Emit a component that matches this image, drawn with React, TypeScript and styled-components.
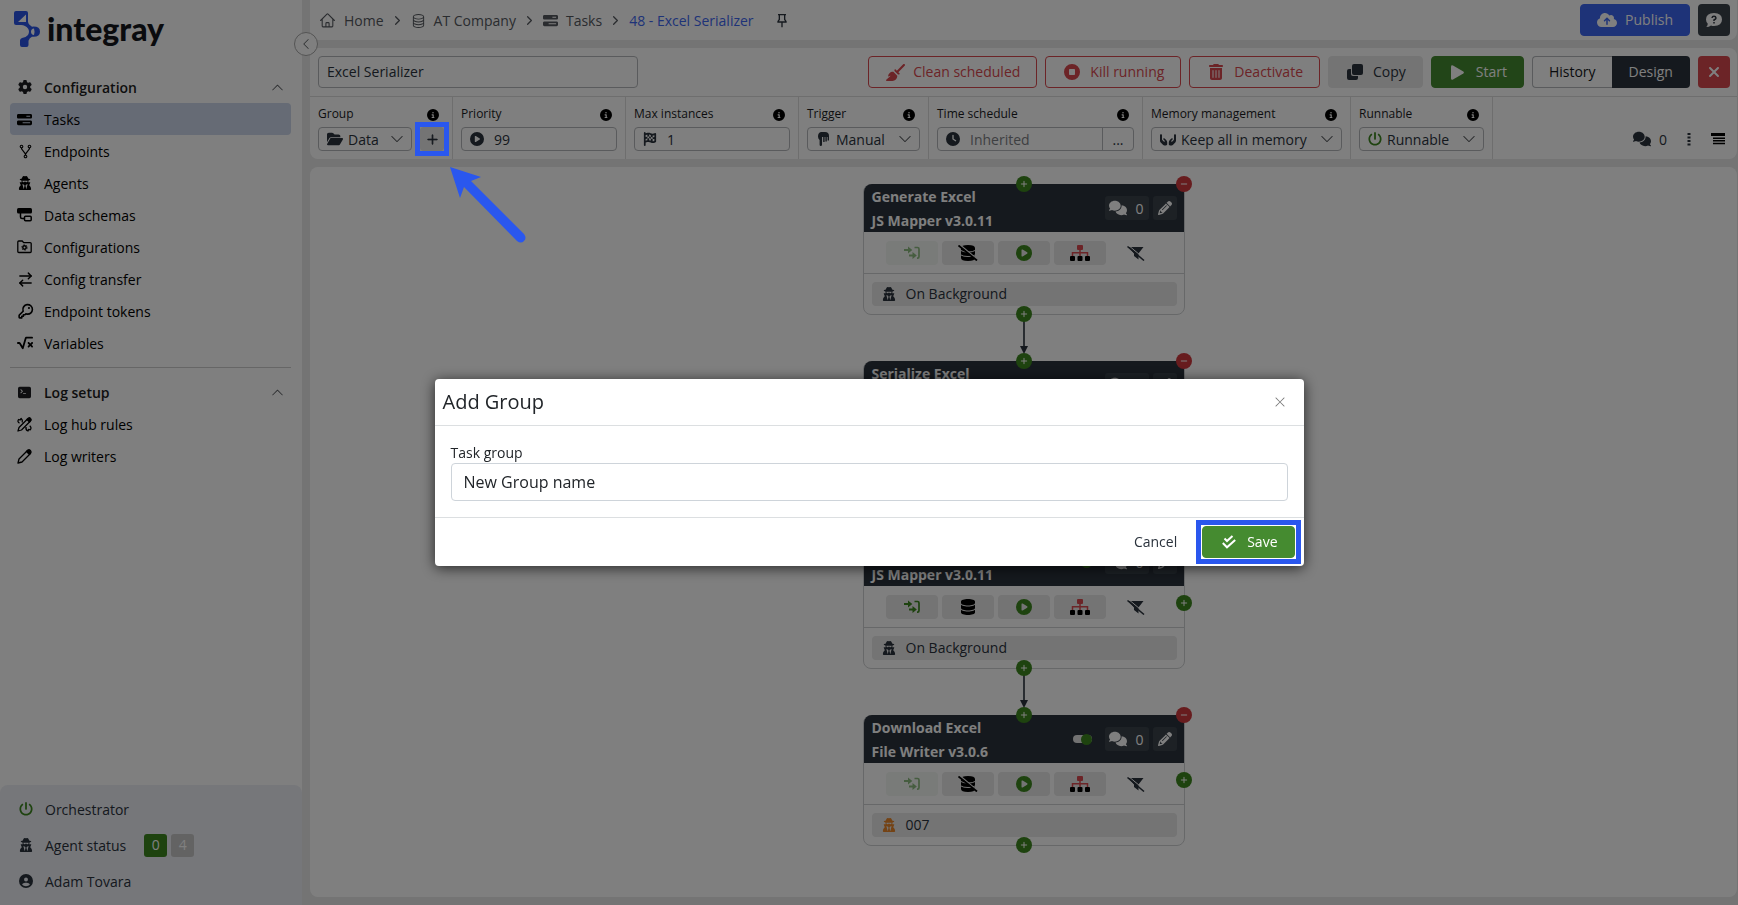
import React from "react";
import styled, { createGlobalStyle, css } from "styled-components";
import {
  FaGear, FaBarsProgress, FaUserSecret, FaFolderOpen, FaCirclePlay, FaFlagCheckered, FaClock,
  FaHandsHolding, FaPowerOff, FaBroom, FaCircleStop, FaTrashCan, FaCloudArrowUp, FaComments,
  FaPencil, FaDatabase, FaCircleInfo, FaXmark, FaPlus, FaMinus, FaCircleUser, FaSquareRootVariable,
} from "react-icons/fa6";
import { BsTerminalFill, BsDatabase, BsChevronDown, BsChevronUp, BsChevronLeft, BsXLg, BsPlusLg } from "react-icons/bs";
import { AiOutlineFork } from "react-icons/ai";
import { PiKeyBold } from "react-icons/pi";
import { HiOutlineHome } from "react-icons/hi2";
import { RiPushpin2Line } from "react-icons/ri";
import { ArrowRightLeft, ChevronRight } from "lucide-react";

const color = {
  ink: "#2a323c",
  black: "#000000",
  green: "#458b30",
  deepGreen: "#3c861e",
  red: "#d9484e",
  blue: "#3d66f0",
  mark: "#2a57ee",
  line: "#dcdcdc",
  field: "#b4b7ba",
  gap: "#e8e8e8",
};

const GlobalStyle = createGlobalStyle`
  *, *::before, *::after { box-sizing: border-box; }
  body { margin: 0; background: ${color.gap}; }
  body, button, input, select {
    font-family: "Open Sans", "Noto Sans", sans-serif;
    font-size: 14px;
    color: ${color.ink};
  }
  button, input, select { margin: 0; padding: 0; border: 0; background: none; outline: none; }
  svg { display: block; flex: none; }
`;

/* ---------- shell ---------- */

const Shell = styled.div`
  display: flex;
  min-height: 100vh;
`;

const Sidebar = styled.aside`
  position: relative;
  display: flex;
  flex-direction: column;
  width: 302px;
  flex: none;
  background: #fff;
`;

const Logo = styled.a`
  display: flex;
  align-items: center;
  gap: 6px;
  height: 55px;
  padding: 3px 0 0 14px;
  margin-bottom: 16px;
  color: #15171d;
  text-decoration: none;
  font: 900 32px/36px Lato, "Open Sans", sans-serif;
`;

const CollapseButton = styled.button`
  position: absolute;
  top: 32px;
  right: -16px;
  z-index: 2;
  display: grid;
  place-items: center;
  width: 24px;
  height: 24px;
  border: 1px solid #a8a8a8;
  border-radius: 50%;
  background: #fff;
`;

const Nav = styled.nav`
  display: flex;
  flex-direction: column;
  padding: 0 11px 0 10px;
`;

const navRow = css`
  display: flex;
  align-items: center;
  gap: 12px;
  width: 100%;
  height: 32px;
  padding: 0 7px;
  border-radius: 4px;
  line-height: 20px;
  text-align: left;
`;

const NavHeading = styled.button`
  ${navRow}
  font-weight: 600;
  color: #1c1d20;
  & > svg:last-child { margin-left: auto; color: #55585c; }
`;

const NavLink = styled.a<{ $active?: boolean }>`
  ${navRow}
  color: ${color.black};
  text-decoration: none;
  background: ${(p) => (p.$active ? "#ccd6ea" : "transparent")};
`;

const RowText = styled.span`
  padding-top: 2px;
`;

const IconSlot = styled.span`
  display: grid;
  place-items: center;
  width: 15px;
  flex: none;
`;

const NavDivider = styled.hr`
  width: 100%;
  height: 1px;
  margin: 8px 0;
  border: 0;
  background: #cdcdcd;
`;

const StatusPanel = styled.div`
  margin-top: auto;
  padding: 6px 0 6px 18px;
  border-radius: 8px 8px 0 0;
  background: #eceef4;
`;

const StatusRow = styled.div`
  display: flex;
  align-items: center;
  gap: 12px;
  height: 36px;
  line-height: 20px;
`;

const Badges = styled.div`
  display: flex;
  gap: 4px;
  margin-left: 6px;
`;

const Badge = styled.span<{ $tone: string }>`
  display: grid;
  place-items: center;
  width: 23px;
  height: 23px;
  border-radius: 3px;
  color: #fff;
  background: ${(p) => p.$tone};
`;

const Main = styled.main`
  display: flex;
  flex-direction: column;
  flex: 1;
  min-width: 0;
  gap: 8px;
  padding: 0 1px 8px 8px;
`;

/* ---------- header ---------- */

const Header = styled.header`
  display: flex;
  align-items: center;
  gap: 8px;
  height: 40px;
  padding: 0 7px 0 9px;
  border-radius: 0 0 8px 8px;
  background: #fff;
`;

const Breadcrumbs = styled.nav`
  display: flex;
  align-items: center;
  gap: 6px;
  margin-right: auto;
`;

const Crumb = styled.a<{ $current?: boolean }>`
  display: flex;
  align-items: center;
  gap: 8px;
  line-height: 20px;
  text-decoration: none;
  white-space: nowrap;
  color: ${(p) => (p.$current ? color.blue : "#54585e")};
`;

const PinButton = styled.button`
  margin-left: 14px;
`;

type Tone = "danger" | "muted" | "success" | "primary";

const tones: Record<Tone, ReturnType<typeof css>> = {
  danger: css`color: ${color.red}; border-color: ${color.red};`,
  muted: css`color: ${color.ink}; background: ${color.gap}; border-color: ${color.gap};`,
  success: css`color: #fff; background: ${color.green}; border-color: ${color.green};`,
  primary: css`color: #fff; background: ${color.blue}; border-color: ${color.blue};`,
};

const Button = styled.button<{ $tone: Tone }>`
  display: flex;
  align-items: center;
  justify-content: center;
  gap: 8px;
  height: 32px;
  padding: 0 16px;
  border: 1px solid;
  border-radius: 4px;
  line-height: 20px;
  white-space: nowrap;
  ${(p) => tones[p.$tone]}
`;

const ButtonIcon = styled.span`
  display: grid;
  place-items: center;
  width: 20px;
`;

const SquareButton = styled.button<{ $fill: string }>`
  display: grid;
  place-items: center;
  width: 32px;
  height: 32px;
  border-radius: 4px;
  color: #fff;
  background: ${(p) => p.$fill};
`;

/* ---------- toolbar ---------- */

const Toolbar = styled.section`
  border-radius: 8px;
  background: #fff;
`;

const ActionRow = styled.div`
  display: flex;
  align-items: center;
  gap: 8px;
  height: 49px;
  padding: 0 7px 0 8px;
  border-bottom: 1px solid ${color.line};
`;

const NameInput = styled.input`
  width: 320px;
  height: 32px;
  margin-right: auto;
  padding: 0 8px 2px;
  border: 1px solid ${color.field};
  border-radius: 4px;
`;

const Segmented = styled.div`
  display: flex;
  width: 158px;
`;

const Segment = styled.button<{ $on?: boolean }>`
  flex: 1;
  height: 32px;
  line-height: 20px;
  ${(p) =>
    p.$on
      ? css`color: #fff; background: ${color.ink}; border-radius: 0 4px 4px 0;`
      : css`border: 1px solid ${color.field}; border-right: 0; border-radius: 4px 0 0 4px; color: #15171b;`}
`;

const ParamRow = styled.div`
  display: flex;
  height: 62px;
`;

const Param = styled.div<{ $width: number }>`
  width: ${(p) => p.$width}px;
  padding: 8px;
  border-right: 1px solid ${color.line};
`;

const ParamLabel = styled.label`
  display: flex;
  justify-content: space-between;
  height: 22px;
  padding-right: 5px;
  font-size: 12px;
  line-height: 18px;
  color: #1a1b1e;
  white-space: nowrap;
  svg { margin-top: 4px; color: ${color.black}; }
`;

const ParamControls = styled.div`
  display: flex;
  gap: 8px;
`;

const FieldBox = styled.div<{ $tight?: boolean }>`
  display: flex;
  align-items: center;
  gap: ${(p) => (p.$tight ? 5 : 10)}px;
  flex: 1;
  min-width: 0;
  height: 24px;
  padding: 0 ${(p) => (p.$tight ? 7 : 8)}px 0 8px;
  border: 1px solid ${color.field};
  border-radius: 4px;
  & > svg:last-child { color: #55585c; }
`;

const BareInput = styled.input`
  flex: 1;
  width: 0;
  padding-top: 2px;
  line-height: 20px;
  &::placeholder { color: #7d8084; opacity: 1; }
`;

const BareSelect = styled.select`
  appearance: none;
  flex: 1;
  width: 0;
  padding-top: 2px;
  line-height: 20px;
`;

const MoreButton = styled.button`
  width: 31px;
  height: 22px;
  margin-right: -8px;
  border-left: 1px solid ${color.field};
`;

const MarkedWrap = styled.div`
  position: relative;
`;

const AddButton = styled.button`
  display: grid;
  place-items: center;
  width: 24px;
  height: 24px;
  border-radius: 4px;
  background: ${color.gap};
`;

const Marker = styled.span<{ $offset: number }>`
  position: absolute;
  inset: ${(p) => -p.$offset}px;
  z-index: 20;
  border: 5px solid ${color.mark};
  pointer-events: none;
`;

const Pointer = styled.svg`
  position: absolute;
  top: 40px;
  left: 30px;
  z-index: 20;
`;

const ParamTools = styled.div`
  display: flex;
  align-items: center;
  gap: 20px;
  margin-left: auto;
  padding: 22px 12px 0 0;
  color: ${color.ink};
`;

const ToolButton = styled.button`
  display: flex;
  align-items: center;
  gap: 8px;
`;

/* ---------- canvas ---------- */

const Canvas = styled.section`
  display: flex;
  flex-direction: column;
  align-items: center;
  gap: 46px;
  flex: 1;
  padding: 17px 0;
  border-radius: 8px;
  background: #fff;
`;

const Card = styled.article`
  position: relative;
  width: 322px;
  height: 131px;
  border: 1px solid #cfd1d3;
  border-radius: 8px;
`;

const CardHead = styled.div`
  display: flex;
  align-items: center;
  gap: 4px;
  height: 48px;
  margin-top: -1px;
  padding: 0 7px 0 8px;
  border-radius: 8px 8px 0 0;
  background: ${color.ink};
  color: #fff;
`;

const CardTitle = styled.h3`
  flex: 1;
  margin: 0;
  padding-top: 2px;
  font-size: 14px;
  font-weight: 700;
  line-height: 24px;
`;

const Chip = styled.button<{ $wide?: boolean }>`
  display: flex;
  align-items: center;
  justify-content: center;
  gap: 8px;
  width: ${(p) => (p.$wide ? 44 : 24)}px;
  height: 24px;
  border-radius: 3px;
  color: #fff;
  background: #3a424b;
`;

const Toggle = styled.input`
  appearance: none;
  display: flex;
  align-items: center;
  width: 19px;
  height: 8px;
  margin-right: 9px;
  border-radius: 4px;
  background: #e4e4e4;
  &::after {
    content: "";
    width: 11px;
    height: 11px;
    margin-left: auto;
    border-radius: 50%;
    background: ${color.deepGreen};
  }
`;

const CardActions = styled.div`
  display: flex;
  justify-content: center;
  gap: 4px;
  height: 42px;
  padding-top: 9px;
  border-bottom: 1px solid #cfd1d3;
`;

const CardAction = styled.button<{ $plain?: boolean; $faded?: boolean }>`
  display: grid;
  place-items: center;
  width: 52px;
  height: 24px;
  border-radius: 4px;
  color: ${(p) => (p.$plain ? color.ink : color.black)};
  background: ${(p) => (p.$plain ? "transparent" : p.$faded ? "#f3f6f3" : color.gap)};
`;

const AgentBar = styled.div`
  display: flex;
  align-items: center;
  gap: 10px;
  height: 24px;
  margin: 8px 7px 0 8px;
  padding: 0 10px;
  border-radius: 4px;
  line-height: 20px;
  background: ${color.gap};
`;

const Knob = styled.button<{ $x: string; $y: string; $remove?: boolean }>`
  position: absolute;
  left: ${(p) => p.$x};
  top: ${(p) => p.$y};
  z-index: 1;
  display: grid;
  place-items: center;
  width: 16px;
  height: 16px;
  margin: -8px 0 0 -8px;
  border-radius: 50%;
  color: #fff;
  background: ${(p) => (p.$remove ? "#cf383d" : color.deepGreen)};
`;

const Connector = styled.svg`
  position: absolute;
  left: 50%;
  top: 136px;
  margin-left: -4px;
`;

/* ---------- dialog ---------- */

const Backdrop = styled.div`
  position: fixed;
  inset: 0;
  z-index: 10;
  display: flex;
  align-items: center;
  justify-content: center;
  padding-top: 40px;
  background: rgba(0, 0, 0, 0.5);
`;

const Dialog = styled.form`
  width: 50%;
  border-radius: 4px;
  background: #fff;
  box-shadow: 0 2px 14px rgba(0, 0, 0, 0.7);
`;

const DialogHead = styled.div`
  display: flex;
  align-items: center;
  justify-content: space-between;
  height: 47px;
  padding: 0 18px 0 8px;
  border-bottom: 1px solid #dcdfe1;
`;

const DialogTitle = styled.h2`
  margin: 0;
  font-size: 20px;
  font-weight: 400;
  line-height: 28px;
  color: #212529;
`;

const DialogBody = styled.div`
  display: flex;
  flex-direction: column;
  padding: 17px 16px 16px;
`;

const DialogLabel = styled.label`
  line-height: 20px;
  color: #212529;
`;

const DialogInput = styled.input`
  width: 100%;
  height: 38px;
  padding: 0 12px;
  border: 1px solid #ced4da;
  border-radius: 4px;
  font-size: 16px;
  color: #212529;
`;

const DialogFoot = styled.div`
  display: flex;
  justify-content: flex-end;
  gap: 8px;
  padding: 8px 9px 8px 8px;
  border-top: 1px solid #dcdfe1;
`;

const CancelButton = styled.button`
  height: 32px;
  padding: 0 17px;
  line-height: 20px;
`;

/* ---------- drawings ---------- */

const LogoMark = () => (
  <svg width="27" height="36" viewBox="0 0 27 36">
    <path fill="#2b55e6" fillRule="evenodd" d="M2 0h10q2 0 2 2v8.500q0 2 1.500 3.200l2.500 2q8-.7 8 5t-8 5q-2.500 1-3.500 4V34q0 2-2 2H8q-2 0-2-2v-4.500q0-2 2-2.500 4-.5 6-3 2-3.300 0-6.500Q11.500 14 7 14H2q-2 0-2-2V2q0-2 2-2zM4 11h8V3.500zM20 17.500q-3 .3-3 3.200t3 3.200q1-3.200 0-6.400z" />
  </svg>
);

const SchemaIcon = () => (
  <svg width="15" height="14" viewBox="0 0 15 14" fill="none" stroke="currentColor" strokeWidth="1.500">
    <rect x="0" y="0" width="15" height="5.500" rx="1.500" fill="currentColor" stroke="none" />
    <path d="M3.500 5v4q0 1.500 1.500 1.500h2.500" />
    <rect x="7.500" y="8.200" width="6.700" height="4.600" rx="1" />
  </svg>
);

const FolderGearIcon = () => (
  <svg width="15" height="14" viewBox="0 0 15 14" fill="none" stroke="currentColor">
    <path strokeWidth="1.300" d="M.8 11.500V2Q.8 1 1.800 1h3.400l1.500 1.600h6.500q1 0 1 1v7.900q0 1-1 1H1.800q-1 0-1-1z" />
    <circle cx="7.500" cy="7.500" r="1.700" strokeWidth="1.500" />
    <circle cx="7.500" cy="7.500" r="2.700" strokeWidth="1" strokeDasharray="1.200 1.630" />
  </svg>
);

const PenIcon = () => (
  <svg width="15" height="15" viewBox="0 0 15 15" fill="none" stroke="currentColor" strokeWidth="1.300" strokeLinejoin="round">
    <path d="M1 14l1-4L10.500 1.500l3 3L5 13z" />
    <path fill="currentColor" d="M9.500 2.500L11 1q1.200-.7 2.300.4t.5 2.400l-1.500 1.500z" />
  </svg>
);

const RulesIcon = () => (
  <svg width="15" height="15" viewBox="0 0 15 15" fill="none" stroke="currentColor" strokeWidth="1.300" strokeLinejoin="round">
    <path d="M1 14l1-3.500L10.500 2l2.500 2.500L4.500 13z" />
    <path fill="currentColor" d="M10 2.500L11.500 1q1-.6 2 .4t.5 2L12.500 5z" />
    <path d="M5.200 5.500Q6 3 4.200 1.500L3 3 1.500 2.500Q0 5 2.500 6.200M9 10q-.5 3 2 4l.7-1.700 1.500.5q1.800-2-.5-4" />
  </svg>
);

const ManualIcon = () => (
  <svg width="11" height="14" viewBox="0 0 11 14" fill="none" stroke="currentColor">
    <path fill="currentColor" stroke="none" d="M3 0h4q4 0 4 4v1H4v7.700Q4 14 2.800 14T1.600 12.700V8Q0 6.500 0 4.500 0 .8 3 0z" />
    <path strokeWidth="1.400" d="M5.900 4.500V10M8.100 4.500v5M10.300 4v4.500" />
  </svg>
);

const CopyIcon = () => (
  <svg width="16" height="16" viewBox="0 0 16 16" fill="currentColor">
    <rect x="5" y="0" width="11" height="11" rx="2" />
    <path d="M4 5H2Q0 5 0 7v7q0 2 2 2h7q2 0 2-2v-2H6q-2 0-2-2z" />
  </svg>
);

const PlayIcon = () => (
  <svg width="13" height="15" viewBox="0 0 13 15" fill="currentColor">
    <path d="M0 1.500Q.2-.3 2 .5l10.300 6q1.200 1 0 2L2 14.500Q.2 15.300 0 13.500z" />
  </svg>
);

const HelpIcon = () => (
  <svg width="16" height="15" viewBox="0 0 16 15">
    <path fill="#fff" d="M8 0q8 .4 8 6.500T8 13q-1.600 0-3-.5Q3 14 .3 14q1.400-1.400 1.500-3.200Q0 9 0 6.500 0 .4 8 0z" />
    <path fill="none" stroke="#2a323c" strokeWidth="1.500" d="M6 5q.2-1.700 2-1.700T10 5q0 1-2 2v1M8 9v1.500" />
  </svg>
);

const PassIcon = ({ faded }: { faded?: boolean }) => {
  const tone = faded ? "#8dbb80" : color.deepGreen;
  return (
    <svg width="16" height="14" viewBox="0 0 16 14" fill="none" stroke={tone}>
      <path strokeWidth="2" d="M0 4h5M5 9.500h5" />
      <path fill={tone} stroke="none" d="M4 .5L8.300 4 4 7.500zM8.500 6l4.300 3.500-4.300 3.500z" />
      <path strokeWidth="1.700" d="M10.500 1.500h3q1.500 0 1.500 1.500v7.500q0 1.700-1.500 1.700H13" />
    </svg>
  );
};

const DatabaseOffIcon = () => (
  <svg width="20" height="16" viewBox="0 0 20 16">
    <path fill="currentColor" d="M3 3q0-3 7-3t7 3v10q0 3-7 3t-7-3z" />
    <path fill="none" stroke={color.gap} strokeWidth="1" d="M3 5.500q2 1.500 7 1.500t7-1.500M3 10q2 1.500 7 1.500T17 10" />
    <path stroke={color.gap} strokeWidth="1.500" d="M1.500-.5l18 15" />
    <path stroke="currentColor" strokeWidth="1.800" d="M.5.500l18.500 15" />
  </svg>
);

const TreeIcon = () => (
  <svg width="20" height="16" viewBox="0 0 20 16">
    <rect x="7" y="0" width="6" height="5" rx="1" fill={color.red} />
    <path fill="none" stroke={color.red} strokeWidth="1.500" d="M10 4v7M2.500 11V7.800h15V11" />
    <path d="M1 11h3q1 0 1 1v3q0 1-1 1H1q-1 0-1-1v-3q0-1 1-1zM8.500 11h3q1 0 1 1v3q0 1-1 1h-3q-1 0-1-1v-3q0-1 1-1zM16 11h3q1 0 1 1v3q0 1-1 1h-3q-1 0-1-1v-3q0-1 1-1z" />
  </svg>
);

const FilterOffIcon = () => (
  <svg width="18" height="15" viewBox="0 0 18 15">
    <path fill="currentColor" d="M1.500 1h15L11.500 7.500v6L7 10V7.500z" />
    <path stroke="#fff" strokeWidth="1" d="M2.200 0l16 13.300" />
    <path stroke="currentColor" strokeWidth="1.500" d="M.5.500l16.500 14" />
  </svg>
);

const DotsIcon = () => (
  <svg width="4" height="14" viewBox="0 0 4 14" fill="currentColor">
    <path d="M.5 1h3v2h-3zM.5 4.500h3v2h-3zM.5 8h3v2h-3zM.5 11.500h3v2h-3z" />
  </svg>
);

const LinesIcon = () => (
  <svg width="14" height="12" viewBox="0 0 14 12" fill="#000">
    <path d="M0 0h14v3H0zM2 4.500h12V6H2zM2 7h12v1.500H2zM2 9.700h12v1.500H2z" />
  </svg>
);

const DoubleCheckIcon = () => (
  <svg width="14" height="14" viewBox="0 0 14 14" fill="none" stroke="currentColor" strokeWidth="2">
    <path d="M2.500 3.500L5 6l5.500-5M.800 8L5 12.300 13.200 5" />
  </svg>
);

/* ---------- parts ---------- */

const navItems: [string, React.ReactNode][] = [
  ["Tasks", <FaBarsProgress size={15} />],
  ["Endpoints", <AiOutlineFork size={17} />],
  ["Agents", <FaUserSecret size={14} />],
  ["Data schemas", <SchemaIcon />],
  ["Configurations", <FolderGearIcon />],
  ["Config transfer", <ArrowRightLeft size={17} strokeWidth={2} />],
  ["Endpoint tokens", <PiKeyBold size={17} />],
  ["Variables", <FaSquareRootVariable size={16} />],
];

function ParamField({ id, label, width, children }: { id: string; label: string; width: number; children: React.ReactNode }) {
  return (
    <Param $width={width}>
      <ParamLabel htmlFor={id}>{label}<FaCircleInfo size={12} /></ParamLabel>
      <ParamControls>{children}</ParamControls>
    </Param>
  );
}

function SelectBox({ id, icon, value }: { id: string; icon: React.ReactNode; value: string }) {
  return (
    <FieldBox $tight>
      {icon}
      <BareSelect id={id} defaultValue={value}><option>{value}</option></BareSelect>
      <BsChevronDown size={14} />
    </FieldBox>
  );
}

interface Step {
  title: string;
  kind: string;
  agent: string;
  agentColor?: string;
  passes?: boolean;
  stores?: boolean;
  toggle?: boolean;
  branch?: boolean;
}

const steps: Step[] = [
  { title: "Generate Excel", kind: "JS Mapper v3.0.11", agent: "On Background" },
  { title: "Serialize Excel", kind: "Serializer v3.0.2", agent: "On Background", passes: true, branch: true },
  { title: "Map Excel", kind: "JS Mapper v3.0.11", agent: "On Background", passes: true, stores: true, toggle: true, branch: true },
  { title: "Download Excel", kind: "File Writer v3.0.6", agent: "007", agentColor: "#e8862a", toggle: true, branch: true },
];

function StepCard({ step, last }: { step: Step; last: boolean }) {
  return (
    <Card>
      <CardHead>
        <CardTitle>{step.title}<br />{step.kind}</CardTitle>
        {step.toggle && <Toggle type="checkbox" defaultChecked aria-label="Enabled" />}
        <Chip $wide><FaComments size={18} />0</Chip>
        <Chip aria-label="Edit"><FaPencil size={14} /></Chip>
      </CardHead>
      <CardActions>
        <CardAction $faded={!step.passes} aria-label="Pass data"><PassIcon faded={!step.passes} /></CardAction>
        <CardAction aria-label="Store data">{step.stores ? <FaDatabase size={16} /> : <DatabaseOffIcon />}</CardAction>
        <CardAction aria-label="Run step"><FaCirclePlay size={16} color={color.deepGreen} /></CardAction>
        <CardAction aria-label="Schema"><TreeIcon /></CardAction>
        <CardAction $plain aria-label="Filter"><FilterOffIcon /></CardAction>
      </CardActions>
      <AgentBar><FaUserSecret size={14} color={step.agentColor} />{step.agent}</AgentBar>
      <Knob $x="50%" $y="-1px" aria-label="Add before"><FaPlus size={8} /></Knob>
      <Knob $x="100%" $y="-1px" $remove aria-label="Remove"><FaMinus size={8} /></Knob>
      {step.branch && <Knob $x="100%" $y="64px" aria-label="Add branch"><FaPlus size={8} /></Knob>}
      <Knob $x="50%" $y="100%" aria-label="Add after"><FaPlus size={8} /></Knob>
      {!last && (
        <Connector width="8" height="33" viewBox="0 0 8 33" fill={color.ink}>
          <path d="M3.200 0h1.600v25H8l-4 8-4-8h3.200z" />
        </Connector>
      )}
    </Card>
  );
}

export default function App() {
  return (
    <>
      <GlobalStyle />
      <Shell>
        <Sidebar>
          <Logo href="#"><LogoMark />integray</Logo>
          <CollapseButton aria-label="Collapse menu"><BsChevronLeft size={12} color="#55585c" /></CollapseButton>
          <Nav>
            <NavHeading><IconSlot><FaGear size={14} /></IconSlot><RowText>Configuration</RowText><BsChevronUp size={13} /></NavHeading>
            {navItems.map(([label, icon]) => (
              <NavLink key={label} href="#" $active={label === "Tasks"}><IconSlot>{icon}</IconSlot><RowText>{label}</RowText></NavLink>
            ))}
            <NavDivider />
            <NavHeading><IconSlot><BsTerminalFill size={13} /></IconSlot><RowText>Log setup</RowText><BsChevronUp size={13} /></NavHeading>
            <NavLink href="#"><IconSlot><RulesIcon /></IconSlot><RowText>Log hub rules</RowText></NavLink>
            <NavLink href="#"><IconSlot><PenIcon /></IconSlot><RowText>Log writers</RowText></NavLink>
          </Nav>
          <StatusPanel>
            <StatusRow><IconSlot><FaPowerOff size={14} color={color.deepGreen} /></IconSlot><RowText>Orchestrator</RowText></StatusRow>
            <StatusRow>
              <IconSlot><FaUserSecret size={14} /></IconSlot><RowText>Agent status</RowText>
              <Badges><Badge $tone={color.deepGreen}>0</Badge><Badge $tone="#c6c6c6">4</Badge></Badges>
            </StatusRow>
            <StatusRow><IconSlot><FaCircleUser size={14} /></IconSlot><RowText>Adam Tovara</RowText></StatusRow>
          </StatusPanel>
        </Sidebar>

        <Main>
          <Header>
            <Breadcrumbs aria-label="Breadcrumb">
              <Crumb href="#"><HiOutlineHome size={17} /><RowText>Home</RowText></Crumb>
              <ChevronRight size={15} color="#54585e" />
              <Crumb href="#"><BsDatabase size={15} /><RowText>AT Company</RowText></Crumb>
              <ChevronRight size={15} color="#54585e" />
              <Crumb href="#"><FaBarsProgress size={15} /><RowText>Tasks</RowText></Crumb>
              <ChevronRight size={15} color="#54585e" />
              <Crumb href="#" $current><RowText>48 - Excel Serializer</RowText></Crumb>
              <PinButton aria-label="Pin"><RiPushpin2Line size={16} /></PinButton>
            </Breadcrumbs>
            <Button $tone="primary"><ButtonIcon><FaCloudArrowUp size={20} /></ButtonIcon>Publish</Button>
            <SquareButton $fill="#3a424b" aria-label="Help"><HelpIcon /></SquareButton>
          </Header>

          <Toolbar>
            <ActionRow>
              <NameInput aria-label="Task name" defaultValue="Excel Serializer" />
              <Button $tone="danger"><ButtonIcon><FaBroom size={19} /></ButtonIcon>Clean scheduled</Button>
              <Button $tone="danger"><ButtonIcon><FaCircleStop size={16} /></ButtonIcon>Kill running</Button>
              <Button $tone="danger"><ButtonIcon><FaTrashCan size={16} /></ButtonIcon>Deactivate</Button>
              <Button $tone="muted"><ButtonIcon><CopyIcon /></ButtonIcon>Copy</Button>
              <Button $tone="success"><ButtonIcon><PlayIcon /></ButtonIcon>Start</Button>
              <Segmented><Segment>History</Segment><Segment $on>Design</Segment></Segmented>
              <SquareButton $fill={color.red} aria-label="Close"><FaXmark size={16} /></SquareButton>
            </ActionRow>
            <ParamRow>
              <ParamField id="group" label="Group" width={143}>
                <SelectBox id="group" icon={<FaFolderOpen size={16} />} value="Data" />
                <MarkedWrap>
                  <AddButton aria-label="Add group"><BsPlusLg size={13} stroke="currentColor" strokeWidth={1} /></AddButton>
                  <Marker $offset={5} />
                  <Pointer width="78" height="78" viewBox="0 0 78 78" fill={color.mark}>
                    <path d="M0 0L31 10 21 14 74 67Q77 71 74 74T67 74L14 20 10 31z" />
                  </Pointer>
                </MarkedWrap>
              </ParamField>
              <ParamField id="priority" label="Priority" width={173}>
                <FieldBox><FaCirclePlay size={14} /><BareInput id="priority" defaultValue="99" /></FieldBox>
              </ParamField>
              <ParamField id="instances" label="Max instances" width={173}>
                <FieldBox><FaFlagCheckered size={14} /><BareInput id="instances" defaultValue="1" /></FieldBox>
              </ParamField>
              <ParamField id="trigger" label="Trigger" width={130}>
                <SelectBox id="trigger" icon={<IconSlot><ManualIcon /></IconSlot>} value="Manual" />
              </ParamField>
              <ParamField id="schedule" label="Time schedule" width={214}>
                <FieldBox>
                  <FaClock size={14} /><BareInput id="schedule" placeholder="Inherited" />
                  <MoreButton aria-label="Edit schedule">...</MoreButton>
                </FieldBox>
              </ParamField>
              <ParamField id="memory" label="Memory management" width={208}>
                <SelectBox id="memory" icon={<FaHandsHolding size={16} />} value="Keep all in memory" />
              </ParamField>
              <ParamField id="runnable" label="Runnable" width={142}>
                <SelectBox id="runnable" icon={<FaPowerOff size={14} color={color.deepGreen} />} value="Runnable" />
              </ParamField>
              <ParamTools>
                <ToolButton><FaComments size={18} />0</ToolButton>
                <ToolButton aria-label="More"><DotsIcon /></ToolButton>
                <ToolButton aria-label="Panel"><LinesIcon /></ToolButton>
              </ParamTools>
            </ParamRow>
          </Toolbar>

          <Canvas>
            {steps.map((step, i) => <StepCard key={step.title} step={step} last={i === steps.length - 1} />)}
          </Canvas>
        </Main>
      </Shell>

      <Backdrop>
        <Dialog role="dialog" aria-label="Add Group" onSubmit={(e) => e.preventDefault()}>
          <DialogHead>
            <DialogTitle>Add Group</DialogTitle>
            <button type="button" aria-label="Close dialog"><BsXLg size={12} color="#777" /></button>
          </DialogHead>
          <DialogBody>
            <DialogLabel htmlFor="task-group">Task group</DialogLabel>
            <DialogInput id="task-group" defaultValue="New Group name" />
          </DialogBody>
          <DialogFoot>
            <CancelButton type="button">Cancel</CancelButton>
            <MarkedWrap>
              <Button $tone="success"><ButtonIcon><DoubleCheckIcon /></ButtonIcon>Save</Button>
              <Marker $offset={6} />
            </MarkedWrap>
          </DialogFoot>
        </Dialog>
      </Backdrop>
    </>
  );
}
